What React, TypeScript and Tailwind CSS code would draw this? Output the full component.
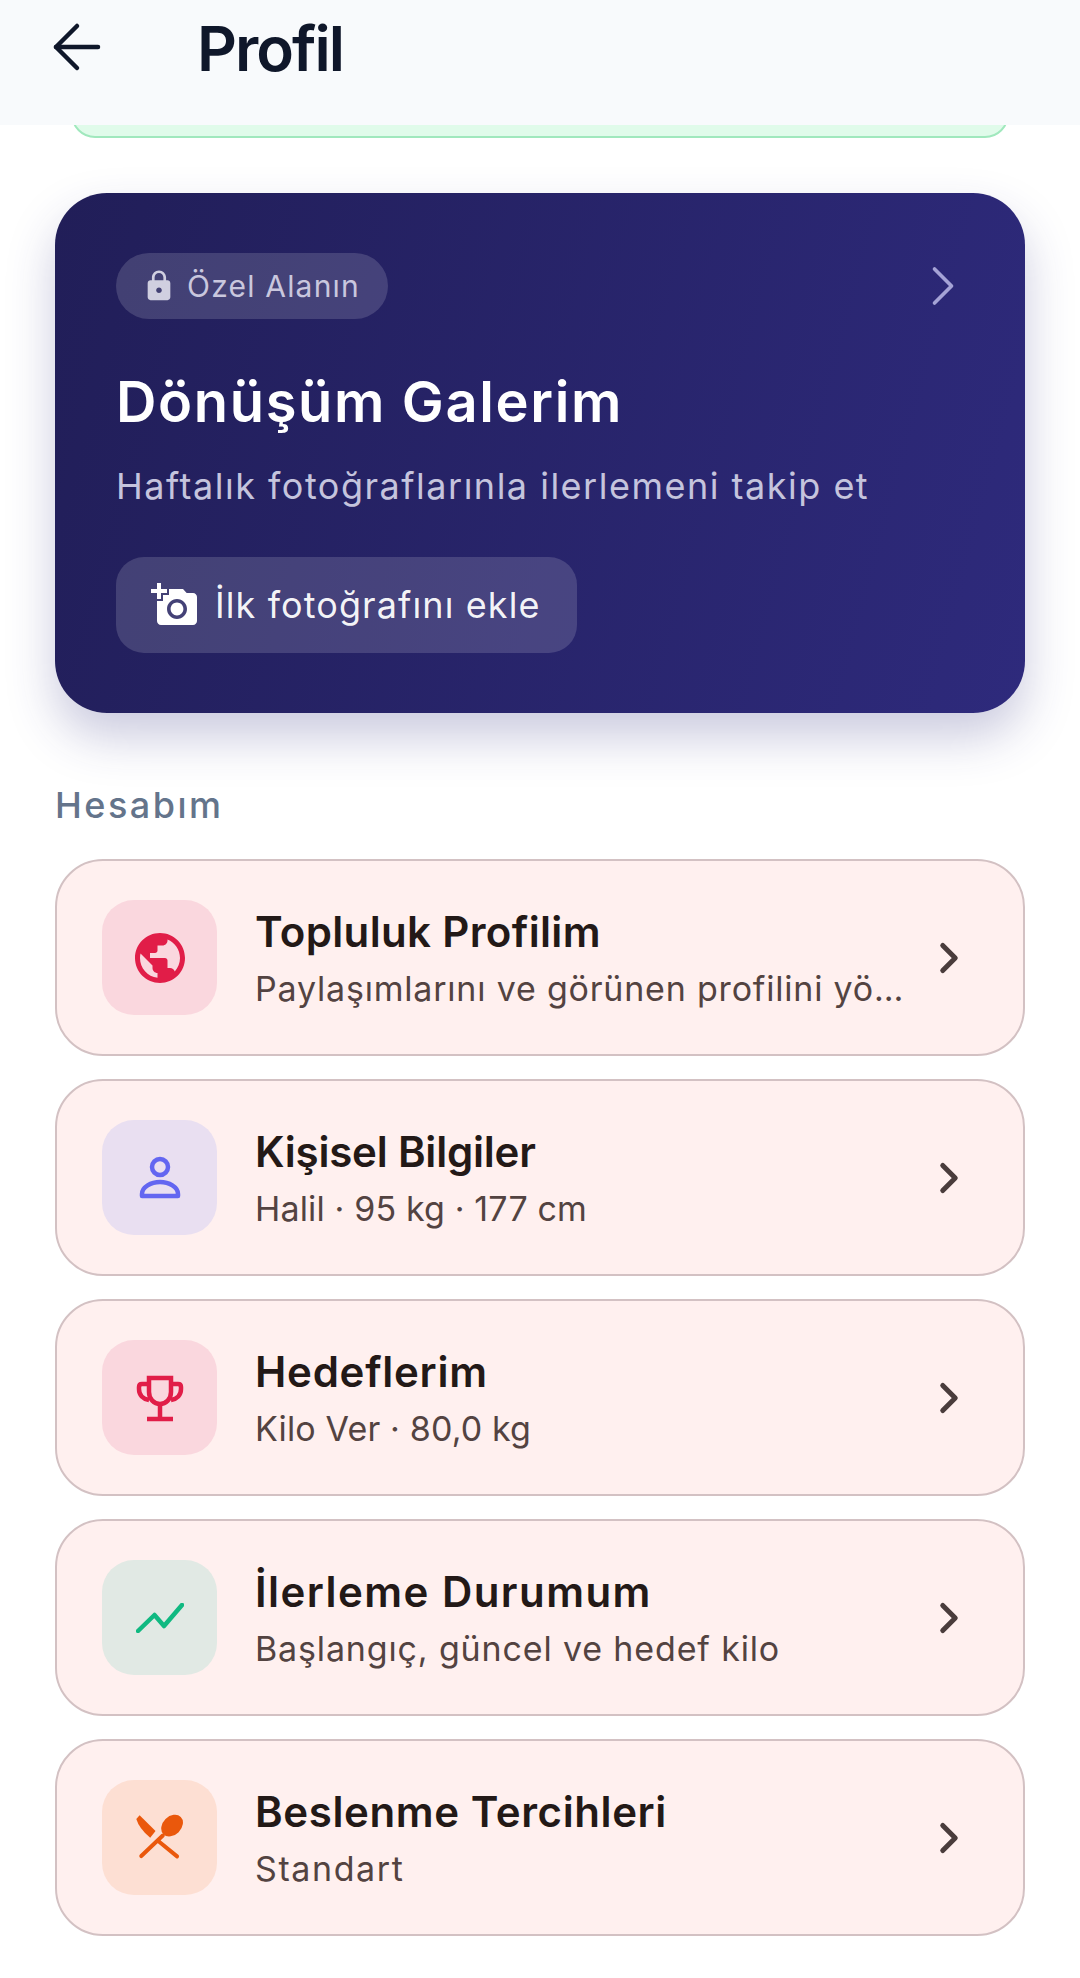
import { ReactNode } from "react";
import { ArrowLeft, ChevronRight } from "lucide-react";
import { MdAddAPhoto, MdLock, MdPublic } from "react-icons/md";

interface AccountItem {
  title: string;
  titleTracking: string;
  subtitle: string;
  subtitleTracking: string;
  iconBg: string;
  icon: ReactNode;
}

const accountItems: AccountItem[] = [
  {
    title: "Topluluk Profilim",
    titleTracking: "tracking-[0.35px]",
    subtitle: "Paylaşımlarını ve görünen profilini yö…",
    subtitleTracking: "tracking-[0.8px]",
    iconBg: "bg-[#fad7de]",
    icon: <MdPublic size={60} className="text-[#e11d48]" />,
  },
  {
    title: "Kişisel Bilgiler",
    titleTracking: "tracking-[-0.2px]",
    subtitle: "Halil · 95 kg · 177 cm",
    subtitleTracking: "tracking-[0.15px]",
    iconBg: "bg-[#e9dff1]",
    icon: (
      <svg width="44" height="44" viewBox="0 0 44 44" fill="none" stroke="#6366f1" strokeWidth="4.5">
        <circle cx="22" cy="11" r="8" />
        <path d="M4 40v-2c0-7 9-12 18-12s18 5 18 12v2z" strokeLinejoin="round" />
      </svg>
    ),
  },
  {
    title: "Hedeflerim",
    titleTracking: "tracking-[0.75px]",
    subtitle: "Kilo Ver · 80,0 kg",
    subtitleTracking: "tracking-[0.15px]",
    iconBg: "bg-[#fad7de]",
    icon: (
      <svg width="48" height="48" viewBox="0 0 48 48" fill="none" stroke="#e11d48" strokeWidth="4.5">
        <path d="M13 4h22v14c0 7-5 12-11 12s-11-5-11-12z" />
        <path d="M13 10H6c-2 0-3 1-3 3v2c0 6 4 10 10 11M35 10h7c2 0 3 1 3 3v2c0 6-4 10-10 11M24 30v14M11 45h26" />
      </svg>
    ),
  },
  {
    title: "İlerleme Durumum",
    titleTracking: "tracking-[1.45px]",
    subtitle: "Başlangıç, güncel ve hedef kilo",
    subtitleTracking: "tracking-[0.85px]",
    iconBg: "bg-[#e1e9e4]",
    icon: (
      <svg width="48" height="30" viewBox="0 0 48 30" fill="none" stroke="#10b981" strokeWidth="4.5" strokeLinecap="round" strokeLinejoin="round">
        <path d="M2 28 18.5 12 28 23 46 2" />
      </svg>
    ),
  },
  {
    title: "Beslenme Tercihleri",
    titleTracking: "tracking-[0.6px]",
    subtitle: "Standart",
    subtitleTracking: "tracking-[1.6px]",
    iconBg: "bg-[#fddfd3]",
    icon: (
      <svg width="53" height="53" viewBox="100 98 160 160" fill="#ea580c" stroke="#ea580c" strokeLinecap="round">
        <path d="M110 122 120 111 168 158 152 179Q118 150 110 122z" stroke="none" />
        <path d="M178 190 233 235M190 172 125 234" strokeWidth="12" fill="none" />
        <ellipse cx="218" cy="142" rx="37" ry="28" transform="rotate(-45 218 142)" stroke="none" />
      </svg>
    ),
  },
];

function AccountRow({ item }: { item: AccountItem }) {
  return (
    <div className="flex h-[197px] items-center rounded-[48px] border-2 border-[#d3c1c3] bg-[#fff0ef] pl-[45px] pr-[49px]">
      <div className={`flex size-[115px] shrink-0 items-center justify-center rounded-[32px] ${item.iconBg}`}>
        {item.icon}
      </div>
      <div className="ml-[38px] min-w-0 flex-1 whitespace-nowrap pt-[3px]">
        <div className={`text-[42px] leading-[56px] font-semibold text-[#231917] ${item.titleTracking}`}>{item.title}</div>
        <div className={`mt-[4px] text-[34px] leading-[50px] text-[#534341] ${item.subtitleTracking}`}>{item.subtitle}</div>
      </div>
      <ChevronRight size={50} strokeWidth={2.4} className="shrink-0 text-[#4a3c3c]" />
    </div>
  );
}

export default function App() {
  return (
    <div className="h-[1978px] w-[1080px] overflow-hidden bg-white font-['Inter',sans-serif]">
      <header className="relative z-10 flex h-[125px] items-start bg-[#f8fafc] pl-[41px] pt-[11px]">
        <ArrowLeft size={72} strokeWidth={1.5} className="text-[#0f172a]" />
        <h1 className="ml-[84px] mt-[10px] text-[62px] leading-[56px] font-semibold tracking-[-2px] text-[#0f172a]">Profil</h1>
      </header>

      <div className="px-[55px]">
        {/* only the bottom of this card is visible, the rest is scrolled under the header */}
        <div className="mx-[16px] -mt-[47px] h-[60px] rounded-[24px] border-2 border-[#a0e8bd] bg-[#e0fbea]" />

        <section className="mt-[55px] h-[520px] rounded-[52px] bg-[linear-gradient(105deg,#211e58,#2e2a7c)] px-[61px] pt-[60px] shadow-[0_24px_48px_rgba(49,46,129,0.25)]">
          <div className="flex items-center justify-between">
            <div className="flex h-[66px] w-[272px] items-center rounded-[33px] bg-white/15 pl-[26px]">
              <MdLock size={34} className="text-[#d0cfe0]" />
              <span className="ml-[11px] text-[30px] tracking-[1.2px] text-[#c9c7de]">Özel Alanın</span>
            </div>
            <ChevronRight size={68} strokeWidth={1.3} className="-my-[1px] -mr-[13px] text-[#a5a3d6]" />
          </div>
          <h2 className="mt-[48px] text-[56px] leading-[70px] font-semibold tracking-[1.65px] text-white">Dönüşüm Galerim</h2>
          <p className="mt-[24px] text-[36px] leading-[50px] tracking-[1.5px] text-[#c5c4dd]">Haftalık fotoğraflarınla ilerlemeni takip et</p>
          <div className="mt-[46px] flex h-[96px] w-[461px] items-center rounded-[28px] bg-white/15 pl-[35px]">
            <MdAddAPhoto size={48} className="text-white" />
            <span className="ml-[16px] text-[36px] tracking-[1.1px] text-white/95">İlk fotoğrafını ekle</span>
          </div>
        </section>

        <h3 className="mt-[67px] text-[36px] leading-[50px] font-medium tracking-[2.5px] text-[#64748b]">Hesabım</h3>

        <div className="mt-[29px] flex flex-col gap-[23px]">
          {accountItems.map((item) => (
            <AccountRow key={item.title} item={item} />
          ))}
        </div>
      </div>
    </div>
  );
}
